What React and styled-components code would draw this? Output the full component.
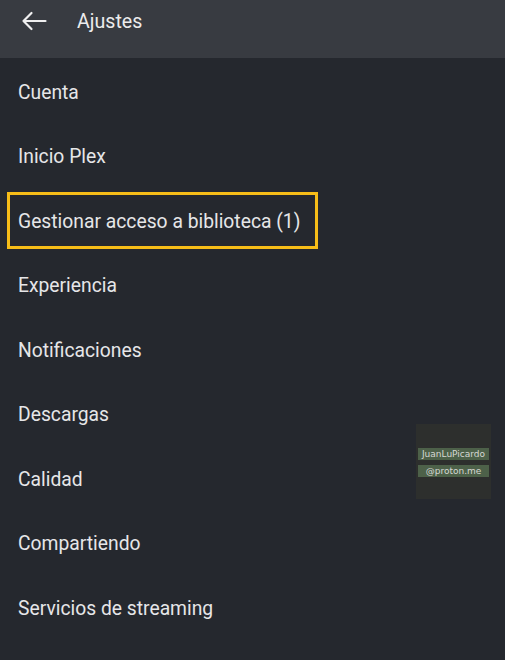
import React from "react";
import styled, { createGlobalStyle } from "styled-components";

const GlobalStyle = createGlobalStyle`
  html, body {
    margin: 0;
    padding: 0;
    background: #25282e;
  }
  body {
    font-family: Roboto, "Noto Sans", sans-serif;
    -webkit-font-smoothing: antialiased;
  }
`;

const Screen = styled.div`
  position: relative;
  width: 505px;
  height: 660px;
  overflow: hidden;
  background: #25282e;
`;

const Toolbar = styled.header`
  display: flex;
  align-items: center;
  height: 58px;
  padding: 0 0 16px 21px;
  box-sizing: border-box;
  background: #383b41;
`;

const BackButton = styled.button`
  display: flex;
  align-items: center;
  justify-content: center;
  width: 26px;
  height: 24px;
  padding: 0;
  border: none;
  background: transparent;
  color: #f0f0f0;
  margin-right: 30px;
`;

const Title = styled.h1`
  margin: 0;
  font-size: 19.6px;
  font-weight: 400;
  color: #ececec;
`;

const List = styled.ul`
  list-style: none;
  margin: 0;
  padding: 2px 0 0;
`;

const Row = styled.li`
  position: relative;
  display: flex;
  align-items: center;
  height: 64.5px;
  padding-left: 18px;
  font-size: 19.3px;
  color: #e6e6e8;

  ${({ $highlight }) =>
    $highlight &&
    `
    &::after {
      content: "";
      position: absolute;
      left: 7px;
      top: 3px;
      width: 311px;
      height: 57px;
      box-sizing: border-box;
      border: 3px solid #f7bd18;
    }
  `}
`;

const Watermark = styled.div`
  position: absolute;
  left: 416px;
  top: 424px;
  width: 75px;
  height: 75px;
  display: flex;
  flex-direction: column;
  align-items: center;
  justify-content: center;
  gap: 5px;
  background: #2d2f2d;
  padding-top: 2px;
  box-sizing: border-box;
`;

const Tag = styled.span`
  display: block;
  background: #4d6149;
  color: #d6d8d4;
  font-family: "DejaVu Sans", sans-serif;
  font-size: 9px;
  line-height: 12px;
  padding: 0 1px;
  width: ${({ $w }) => $w}px;
  box-sizing: border-box;
  text-align: center;
  white-space: nowrap;
  overflow: hidden;
`;

const items = [
  "Cuenta",
  "Inicio Plex",
  "Gestionar acceso a biblioteca (1)",
  "Experiencia",
  "Notificaciones",
  "Descargas",
  "Calidad",
  "Compartiendo",
  "Servicios de streaming",
];

export default function App() {
  return (
    <>
      <GlobalStyle />
      <Screen>
        <Toolbar>
          <BackButton aria-label="Atrás">
            <svg width="26" height="20" viewBox="0 0 26 20" fill="none">
              <path
                d="M24.5 10H2.5M10.5 2L2.5 10l8 8"
                stroke="currentColor"
                strokeWidth="2.2"
                strokeLinecap="round"
                strokeLinejoin="round"
              />
            </svg>
          </BackButton>
          <Title>Ajustes</Title>
        </Toolbar>
        <List>
          {items.map((label, i) => (
            <Row key={label} $highlight={i === 2}>
              {label}
            </Row>
          ))}
        </List>
        <Watermark>
          <Tag $w={71}>JuanLuPicardo</Tag>
          <Tag $w={71}>@proton.me</Tag>
        </Watermark>
      </Screen>
    </>
  );
}
